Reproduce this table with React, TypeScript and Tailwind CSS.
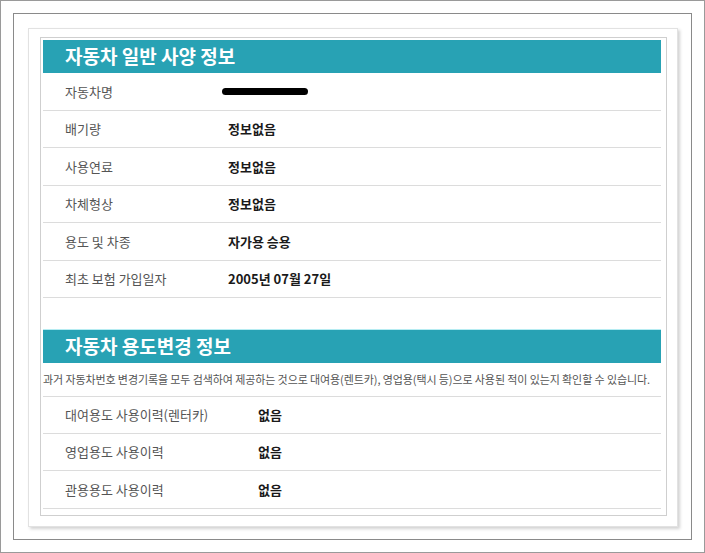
import React from "react";

const font = { fontFamily: '"Noto Sans CJK KR", "Noto Sans", sans-serif' };

function Row({ label, value, valueCol, children, top }: { label: string; value?: string; valueCol: string; children?: React.ReactNode; top?: boolean }) {
  return (
    <div className={`flex h-[37.5px] items-center border-b border-[#dcdcdc] pl-[22px] ${top ? "border-t" : ""}`}>
      <div className={`${valueCol} shrink-0 text-[13px] text-[#555]`}>{label}</div>
      {children ?? <div className="text-[13px] font-bold text-[#1a1a1a]">{value}</div>}
    </div>
  );
}

export default function App() {
  return (
    <div style={font} className="flex h-[553px] w-[705px] border border-[#9a9a9a] bg-white p-[12px]">
      <div className="flex flex-1 border border-[#8a8a8a] pb-[12px] pl-[14px] pr-[13px] pt-[14px]">
        <div className="flex flex-1 border border-[#e2e2e2] bg-white pb-[10px] pl-[11px] pr-[10px] pt-[8px] shadow-[2px_2px_3px_rgba(0,0,0,0.18)]">
          <div className="flex flex-1 flex-col border border-[#cfcfcf] pl-[2px] pr-[5px] pt-[2px]">
            <div className="flex h-[33px] items-center bg-[#28a2b4] pl-[22px] text-[19px] font-bold text-white">
              자동차 일반 사양 정보
            </div>
            <Row label="자동차명" valueCol="w-[157px]">
              <div className="h-[7px] w-[86px] rounded-full bg-black blur-[0.6px]" />
            </Row>
            <Row label="배기량" value="정보없음" valueCol="w-[163px]" />
            <Row label="사용연료" value="정보없음" valueCol="w-[163px]" />
            <Row label="차체형상" value="정보없음" valueCol="w-[163px]" />
            <Row label="용도 및 차종" value="자가용 승용" valueCol="w-[163px]" />
            <Row label="최초 보험 가입일자" value="2005년 07월 27일" valueCol="w-[163px]" />

            <div className="mt-[31px] flex h-[34px] items-center border-t border-[#b5ecf2] bg-[#28a2b4] pl-[22px] text-[19px] font-bold text-white">
              자동차 용도변경 정보
            </div>
            <div className="flex h-[33px] items-center whitespace-nowrap text-[11px] tracking-[-0.1px] text-[#555]">
              과거 자동차번호 변경기록을 모두 검색하여 제공하는 것으로 대여용(렌트카), 영업용(택시 등)으로 사용된 적이 있는지 확인할 수 있습니다.
            </div>
            <Row top label="대여용도 사용이력(렌터카)" value="없음" valueCol="w-[193px]" />
            <Row label="영업용도 사용이력" value="없음" valueCol="w-[193px]" />
            <Row label="관용용도 사용이력" value="없음" valueCol="w-[193px]" />
          </div>
        </div>
      </div>
    </div>
  );
}
